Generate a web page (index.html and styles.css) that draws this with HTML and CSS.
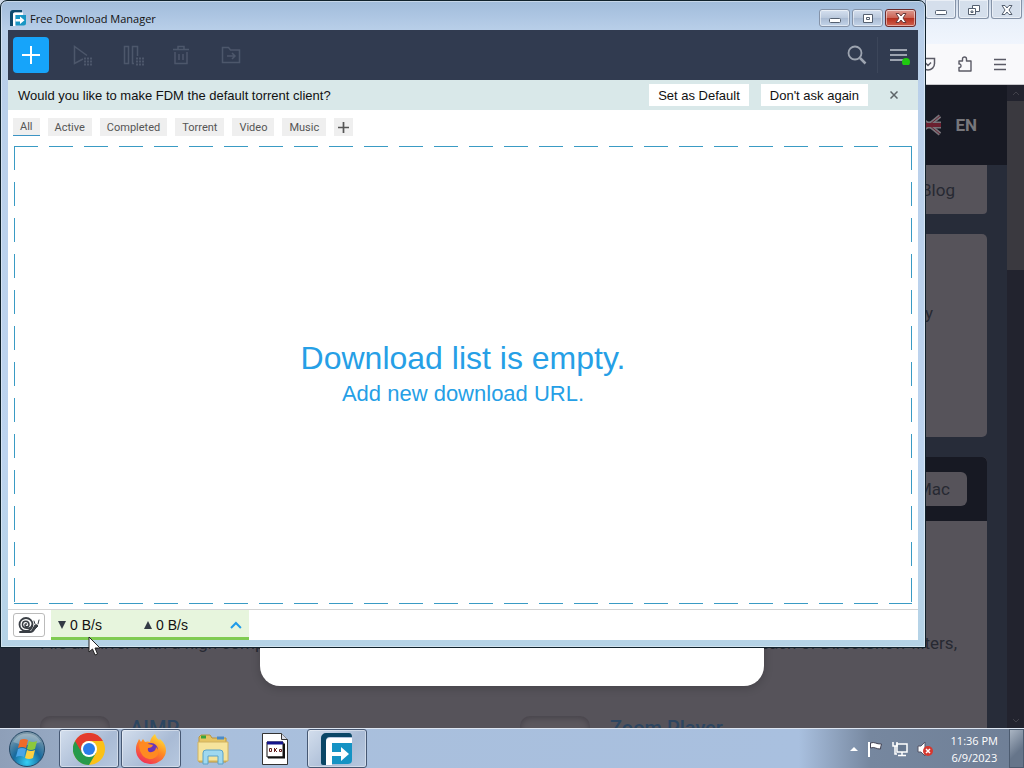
FILE: index.html
```
<!DOCTYPE html>
<html lang="en">
<head>
    <meta charset="UTF-8">
    <meta name="viewport" content="width=device-width, initial-scale=1.0">
    <title>Free Download Manager</title>
    <link rel="stylesheet" href="styles.css">
</head>
<body>
    <div class="desktop">
        <div class="browser">
            <div class="browser-title">
                <button type="button" class="win-button" aria-label="Minimize browser">
                    <svg width="14" height="12" viewBox="0 0 14 12"><rect x="1.500" y="6.500" width="11" height="4" rx="1" fill="#fff" stroke="#556070"/></svg>
                </button>
                <button type="button" class="win-button" aria-label="Restore browser">
                    <svg width="14" height="12" viewBox="0 0 14 12" fill="#fff" stroke="#556070"><path d="M5.500 1.500h7v6h-7z"/><path d="M1.500 4.500h7v6h-7z"/><path d="M4 7h2v1.500H4z"/></svg>
                </button>
                <button type="button" class="win-button" aria-label="Close browser">
                    <svg width="14" height="12" viewBox="0 0 14 12"><path d="M2 1.500h3l2 2.500 2-2.500h3L9 6l3 4.500H9L7 8l-2 2.500H2L5 6z" fill="#fff" stroke="#556070"/></svg>
                </button>
            </div>
            <div class="browser-tools">
                <button type="button" class="icon-button" aria-label="Save to Pocket">
                    <svg width="16" height="16" viewBox="0 0 16 16" fill="none" stroke="#5b5b66" stroke-width="1.500"><path d="M1.500 2.500h13v5a6.500 6.500 0 0 1-13 0zM5 6.500l3 3 3-3"/></svg>
                </button>
                <button type="button" class="icon-button" aria-label="Extensions">
                    <svg width="16" height="16" viewBox="0 0 16 16" fill="none" stroke="#5b5b66" stroke-width="1.400" stroke-linejoin="round"><path d="M3 5h3.500V3a2 2 0 0 1 4 0v2H15v10H3v-3.500H4a2 2 0 0 0 0-3.500H3z"/></svg>
                </button>
                <button type="button" class="icon-button" aria-label="Open menu">
                    <svg width="14" height="14" viewBox="0 0 14 14" stroke="#5b5b66" stroke-width="1.300"><path d="M1 2.500h12M1 7.500h12M1 12.500h12"/></svg>
                </button>
            </div>
            <div class="browser-view">
                <div class="site">
                    <div class="site-nav">
                        <svg width="24" height="22" viewBox="0 0 24 22">
                            <path d="M1 2l22 18M1 20L23 2" stroke="#77747a" stroke-width="4"/>
                            <path d="M0 11h24" stroke="#77747a" stroke-width="7"/>
                            <path d="M0 11h24" stroke="#6b2030" stroke-width="4"/>
                            <path d="M1 2l22 18M1 20L23 2" stroke="#6b2030"/>
                        </svg>
                        <span>EN</span>
                    </div>
                    <div class="site-menu"><a href="#">Blog</a></div>
                    <div class="site-card">directory</div>
                    <div class="site-section">
                        <div class="site-section-head"><a href="#">Mac</a></div>
                        <div class="site-text">
                            <span>File archiver with a high comp</span>
                            <span>each of DirectShow filters,</span>
                        </div>
                        <div class="site-apps">
                            <div class="site-app"><i></i><a href="#">AIMP</a></div>
                            <div class="site-app"><i></i><a href="#">Zoom Player</a></div>
                        </div>
                    </div>
                    <div class="site-dialog"></div>
                </div>
                <div class="scrollbar">
                    <svg width="8" height="16" viewBox="0 0 8 16" fill="none" stroke="#41414a"><path d="M1 10l3-3 3 3"/></svg>
                    <div class="scrollbar-thumb"></div>
                    <svg class="scroll-down" width="8" height="16" viewBox="0 0 8 16" fill="none" stroke="#41414a"><path d="M1 7l3 3 3-3"/></svg>
                </div>
            </div>
        </div>

        <div class="fdm">
            <div class="fdm-title">
                <svg width="16" height="16" viewBox="0 0 32 32">
                    <path d="M0 32V6a6 6 0 0 1 6-6h18v5H9a3 3 0 0 0-3 3v24z" fill="#0c4a6e"/>
                    <path d="M6 32V9a4 4 0 0 1 4-4h16v5H11v22z" fill="#fff"/>
                    <path d="M11 10h21v16a5 5 0 0 1-5 5H11z" fill="#1996c4"/>
                    <path d="M11 18h9v-5l9 7.500-9 7.500v-5h-9z" fill="#fff"/>
                </svg>
                <span class="fdm-name">Free Download Manager</span>
                <button type="button" class="win-button" aria-label="Minimize">
                    <svg width="14" height="12" viewBox="0 0 14 12"><rect x="1.500" y="6.500" width="11" height="4" rx="1" fill="#fff" stroke="#556070"/></svg>
                </button>
                <button type="button" class="win-button" aria-label="Maximize">
                    <svg width="14" height="12" viewBox="0 0 14 12" fill="#fff" stroke="#556070"><path d="M2.500 2.500h9v8h-9z"/><path d="M5.500 5.500h3v2h-3z"/></svg>
                </button>
                <button type="button" class="win-button close" aria-label="Close">
                    <svg width="14" height="12" viewBox="0 0 14 12"><path d="M2 1.500h3l2 2.500 2-2.500h3L9 6l3 4.500H9L7 8l-2 2.500H2L5 6z" fill="#fff" stroke="#6a3a3a"/></svg>
                </button>
            </div>

            <div class="fdm-client">
                <div class="toolbar">
                    <button type="button" class="add-button" aria-label="Add download">
                        <svg width="20" height="20" viewBox="0 0 20 20" stroke="#fff" stroke-width="2"><path d="M10 1v18M1 10h18"/></svg>
                    </button>
                    <button type="button" class="tool-button" aria-label="Start">
                        <svg width="24" height="24" viewBox="0 0 24 24" fill="none" stroke="#4d576b" stroke-width="1.500"><path d="M13 16L4.500 20.500v-17L17 12.500"/><path d="M14 15.500h8M14 18.500h8M14 21.500h8" stroke-width="2" stroke-dasharray="2 1"/></svg>
                    </button>
                    <button type="button" class="tool-button" aria-label="Pause">
                        <svg width="24" height="24" viewBox="0 0 24 24" fill="none" stroke="#4d576b" stroke-width="1.500"><path d="M4.500 3.500h4v17h-4zM14 20.500h-1.500v-17h5V13"/><path d="M16 15.500h8M16 18.500h8M16 21.500h8" stroke-width="2" stroke-dasharray="2 1"/></svg>
                    </button>
                    <button type="button" class="tool-button" aria-label="Delete">
                        <svg width="24" height="24" viewBox="0 0 24 24" fill="none" stroke="#4d576b" stroke-width="1.500"><path d="M3 6.500h16M5 9v11.500h12V9M8 6V3.500h6V6M9 11v6M13 11v6"/></svg>
                    </button>
                    <button type="button" class="tool-button" aria-label="Move to folder">
                        <svg width="24" height="24" viewBox="0 0 24 24" fill="none" stroke="#4d576b" stroke-width="1.500"><path d="M2.500 4.500h6l2 2.500h9v12.500h-17zM7 13h8M12 10l3 3-3 3"/></svg>
                    </button>
                    <button type="button" class="tool-button search" aria-label="Search">
                        <svg width="20" height="20" viewBox="0 0 20 20" fill="none" stroke="#9da4b0"><circle cx="8" cy="8" r="6.500" stroke-width="1.800"/><path d="M13 13l5.500 5.500" stroke-width="2.500"/></svg>
                    </button>
                    <button type="button" class="tool-button menu" aria-label="Menu">
                        <svg width="20" height="20" viewBox="0 0 20 20"><path d="M0 5h17M0 10h17M0 15h13" stroke="#9da4b0" stroke-width="2"/><circle cx="16" cy="16" r="4" transform="translate(0 1)" fill="#1fcb10"/></svg>
                    </button>
                </div>

                <div class="banner">
                    <span class="banner-text">Would you like to make FDM the default torrent client?</span>
                    <button type="button" class="banner-button">Set as Default</button>
                    <button type="button" class="banner-button">Don't ask again</button>
                    <button type="button" class="banner-close" aria-label="Dismiss">
                        <svg width="8" height="8" viewBox="0 0 8 8" stroke="#5d6468" stroke-width="1.500"><path d="M.500.500l7 7M7.500.500l-7 7"/></svg>
                    </button>
                </div>

                <div class="tabs">
                    <button type="button" class="tab active">All</button>
                    <button type="button" class="tab">Active</button>
                    <button type="button" class="tab">Completed</button>
                    <button type="button" class="tab">Torrent</button>
                    <button type="button" class="tab">Video</button>
                    <button type="button" class="tab">Music</button>
                    <button type="button" class="tab add-tab" aria-label="Add tag">
                        <svg width="11" height="11" viewBox="0 0 11 11" stroke="#555" stroke-width="1.700"><path d="M5.500 0v11M0 5.500h11"/></svg>
                    </button>
                </div>

                <div class="drop-area">
                    <h1>Download list is empty.</h1>
                    <p>Add new download URL.</p>
                </div>

                <div class="status">
                    <button type="button" class="snail-button" aria-label="Snail mode">
                        <svg width="22" height="16" viewBox="0 0 22 16" fill="none" stroke="#3a3f45" stroke-linecap="round">
                            <path d="M2 15h10c4 0 4-3 6-6" stroke-width="2"/>
                            <path d="M14 13l3-5q2-1 3 1l-4 4z" fill="#3a3f45"/>
                            <path d="M17 7l-1-3M20 7l1-4"/>
                            <circle cx="8" cy="7.500" r="6.500" stroke-width="1.800"/>
                            <path d="M14 8c-1 5-10 4-9.500-1C5 3 11 3.500 11 7.500c0 3-4 3-4 .500q0-1.500 1.500-1" stroke-width="1.500"/>
                        </svg>
                    </button>
                    <button type="button" class="speed">
                        <span class="rate"><i class="down"></i>0 B/s</span>
                        <span class="rate"><i class="up"></i>0 B/s</span>
                        <svg width="12" height="8" viewBox="0 0 12 8" fill="none" stroke="#1f9bea" stroke-width="2"><path d="M1 7l5-5 5 5"/></svg>
                    </button>
                </div>
            </div>
        </div>

        <svg class="cursor" width="13" height="20" viewBox="0 0 13 20"><path d="M1 1v15l3.500-3 2.500 6 2.500-1L7 12h5z" fill="#fff" stroke="#222"/></svg>
    </div>

    <div class="taskbar">
        <button type="button" class="start" aria-label="Start menu">
            <svg width="38" height="38" viewBox="0 0 38 38">
                <defs>
                    <radialGradient id="orb" cx="50%" cy="88%" r="80%">
                        <stop offset="0" stop-color="#35d0f5"/>
                        <stop offset=".5" stop-color="#176a9e"/>
                        <stop offset="1" stop-color="#7b98aa"/>
                    </radialGradient>
                </defs>
                <circle cx="19" cy="19" r="17.500" fill="url(#orb)" stroke="#254866"/>
                <path d="M5 12a16 16 0 0 1 28 0q-14 6-28 0z" fill="#fff" opacity=".25"/>
                <path d="M12 10q4-2 8 0l-2 8q-4-2-8 0z" fill="#ee6a2a"/>
                <path d="M21 11q4 2 8 0l-2 8q-4 2-8 0z" fill="#8cc83c"/>
                <path d="M10 19q4-2 8 0l-2 8q-4-2-8 0z" fill="#4aa5e8"/>
                <path d="M19 20q4 2 8 0l-2 8q-4 2-8 0z" fill="#fbd042"/>
            </svg>
        </button>
        <button type="button" class="task open" aria-label="Chrome">
            <svg width="32" height="32" viewBox="0 0 32 32">
                <circle cx="16" cy="16" r="16" fill="#fbc116"/>
                <path d="M16 16L2.100 8A16 16 0 0 0 16 32l7-12z" fill="#269a4b"/>
                <path d="M2.100 8a16 16 0 0 1 27.800 0H16a8 8 0 0 0-7 12z" fill="#e33b2e"/>
                <circle cx="16" cy="16" r="8" fill="#fff"/>
                <circle cx="16" cy="16" r="6" fill="#2a7de9"/>
            </svg>
        </button>
        <button type="button" class="task open" aria-label="Firefox">
            <svg width="32" height="32" viewBox="0 0 32 32">
                <defs>
                    <linearGradient id="fox" x1=".8" y1="0" x2=".2" y2="1">
                        <stop offset="0" stop-color="#ffe83c"/>
                        <stop offset=".45" stop-color="#ff8a22"/>
                        <stop offset="1" stop-color="#f0265c"/>
                    </linearGradient>
                </defs>
                <path d="M1 16C1 11 3 9 4 6l2 3 2-3 2 3q3-1 5 0 1-5 5-8 1 4 4 6l1-1q6 5 6 12a15 14 0 0 1-30-2z" fill="url(#fox)"/>
                <circle cx="16" cy="17" r="7" fill="#6a35b8"/>
                <path d="M4 11q5-3 9 0l5 1q-1 3-5 3-1 5 4 4 4-1 4-5 5 5 0 10-7 5-13-1-4-5-4-12z" fill="#ff8a22"/>
            </svg>
        </button>
        <button type="button" class="task" aria-label="Explorer">
            <svg width="32" height="32" viewBox="0 0 32 32">
                <path d="M2 4l2-2h9l2 3h14v24H2z" fill="#e5c463" stroke="#b99440"/>
                <path d="M4 4h5" stroke="#38a33c" stroke-width="3"/>
                <path d="M20 5h7" stroke="#4b8bc8" stroke-width="3"/>
                <path d="M1 9h30v19H1z" fill="#f6e49c" stroke="#d0b260"/>
                <path d="M6 31V20q0-3 3-3h14q3 0 3 3v11h-5v-8H11v8z" fill="#9fd8ef" stroke="#5aa2c8"/>
            </svg>
        </button>
        <button type="button" class="task" aria-label="Script host">
            <svg width="26" height="32" viewBox="0 0 26 32">
                <path d="M.500.500h19l6 6v25H.500z" fill="#fff" stroke="#333"/>
                <path d="M19.500.500v6h6" fill="#d8dce8" stroke="#333"/>
                <path d="M5 9h16v15H5z" fill="#fff" stroke="#111"/>
                <path d="M5 10h16" stroke="#14148c" stroke-width="3"/>
                <path d="M7.500 15.500h2v3h-2zM12.500 15v4M15 15l-2 2 2 2M17.500 16.500h2v2h-2z" fill="none" stroke="#622"/>
                <path d="M6 24.500h16v-14" fill="none" stroke="#111" stroke-width="2"/>
            </svg>
        </button>
        <button type="button" class="task open" aria-label="Free Download Manager">
            <svg width="32" height="32" viewBox="0 0 32 32">
                <path d="M0 30V5a5 5 0 0 1 5-5h23q3 0 3 4H9a4 4 0 0 0-4 4v24H2q-2 0-2-2z" fill="#0a4666"/>
                <path d="M5 32V9a4 4 0 0 1 4-4h22v5H11v22z" fill="#fff"/>
                <path d="M11 10h20v17a4 4 0 0 1-4 4H11z" fill="#1593c4"/>
                <path d="M11 19h9v-5l8 7-8 7v-5h-9z" fill="#fff"/>
            </svg>
        </button>
        <div class="tray">
            <svg width="8" height="5" viewBox="0 0 8 5"><path d="M0 5l4-4 4 4z" fill="#fff"/></svg>
            <svg width="16" height="16" viewBox="0 0 16 16"><path d="M2 1v15" stroke="#fff" stroke-width="2"/><path d="M3.500 2q3-1 5 0t6 1q-1 3-1 5-3 0-5-1t-5 0z" fill="#fff" stroke="#445"/></svg>
            <svg width="16" height="16" viewBox="0 0 16 16" fill="none" stroke="#fff" stroke-width="1.500"><path d="M5 3h10v8H5z" fill="#67788f"/><path d="M10 11v3M6 14.500h8M1 1v4h4V1M3 5v8h2"/></svg>
            <svg width="16" height="16" viewBox="0 0 16 16"><path d="M1 5h3l4-4v14l-4-4H1z" fill="#fff" stroke="#556"/><circle cx="11" cy="10" r="5" fill="#d6382f"/><path d="M9 8l4 4M13 8l-4 4" stroke="#fff" stroke-width="1.500"/></svg>
        </div>
        <div class="clock"><span>11:36 PM</span><span>6/9/2023</span></div>
        <button type="button" class="show-desktop" aria-label="Show desktop"></button>
    </div>
</body>
</html>
```
FILE: styles.css
```
* {
    box-sizing: border-box;
}
body {
    margin: 0;
    height: 100vh;
    display: flex;
    flex-direction: column;
    overflow: hidden;
    font-family: "Liberation Sans", Arial, sans-serif;
    font-size: 13px;
    color: #111;
}
button {
    display: flex;
    align-items: center;
    justify-content: center;
    flex: none;
    margin: 0;
    padding: 0;
    border: none;
    background: none;
    font: inherit;
    color: inherit;
    cursor: pointer;
}
a {
    color: inherit;
    text-decoration: none;
}
h1, p {
    margin: 0;
    font-weight: normal;
}
.desktop {
    position: relative;
    flex: 1;
    min-height: 0;
    display: flex;
}

/* browser behind */
.browser {
    flex: 1;
    display: flex;
    flex-direction: column;
    font-family: Roboto, sans-serif;
}
.browser-title {
    display: flex;
    justify-content: flex-end;
    gap: 2px;
    height: 44px;
    padding-right: 2px;
    background: linear-gradient(#cbd7e7, #e9f0fa 20px, #f0f5fd);
}
.win-button {
    width: 31px;
    height: 18px;
    border: 1px solid #8593a8;
    border-radius: 3px;
    background: linear-gradient(#d5e0ef, #b9c8dc 50%, #a9bad2 50%, #c3d4e9);
    box-shadow: inset 0 0 0 1px rgba(255, 255, 255, 0.5);
}
.browser-title .win-button {
    height: 19px;
    padding-top: 2px;
    border-top: none;
    border-radius: 0 0 3px 3px;
    background: #d5dfec;
}
.win-button.close {
    border-color: #6b2b2c;
    background: linear-gradient(#dd9a90, #cb6152 50%, #b52d1c 50%, #d0604d);
}
.browser-tools {
    display: flex;
    align-items: center;
    justify-content: flex-end;
    gap: 12px;
    height: 41px;
    padding-right: 12px;
    background: #f9f9fb;
    border-bottom: 1px solid #c8c8cc;
}
.icon-button {
    width: 24px;
    height: 24px;
}
.browser-view {
    flex: 1;
    min-height: 0;
    display: flex;
}
.site {
    position: relative;
    flex: 1;
    display: flex;
    flex-direction: column;
    overflow: hidden;
    background: #272c39;
    font-size: 17px;
    color: #272932;
}
.site-nav {
    display: flex;
    flex: none;
    align-items: center;
    justify-content: flex-end;
    gap: 14px;
    height: 80px;
    padding-right: 30px;
    background: #171923;
    color: #77777c;
    font-size: 17px;
    font-weight: 700;
}
.site-menu, .site-card {
    display: flex;
    flex: none;
    align-items: center;
    justify-content: flex-end;
    margin: 0 20px 20px;
    background: #56535a;
}
.site-menu {
    height: 49px;
    padding-right: 32px;
    border-radius: 0 0 4px 4px;
}
.site-card {
    height: 203px;
    padding: 0 54px 46px 0;
    border-radius: 5px;
}
.site-section {
    display: flex;
    flex: 1;
    min-height: 0;
    flex-direction: column;
    margin: 0 20px;
    border-radius: 5px 5px 0 0;
    background: #56535a;
}
.site-section-head {
    display: flex;
    flex: none;
    align-items: center;
    justify-content: flex-end;
    height: 64px;
    padding-right: 20px;
    border-radius: 5px 5px 0 0;
    background: #171923;
}
.site-section-head a {
    padding: 7px 17px;
    border-radius: 6px;
    background: #56535a;
}
.site-text {
    display: flex;
    justify-content: space-between;
    padding: 112px 30px 0 20px;
    line-height: 20px;
}
.site-apps {
    display: grid;
    grid-template-columns: 1fr 1fr;
    column-gap: 13px;
    padding: 63px 0 0 20px;
    color: #2c4560;
    font-size: 20px;
    font-weight: 500;
    line-height: 24px;
}
.site-app {
    display: flex;
    gap: 20px;
}
.site-app i {
    width: 70px;
    height: 70px;
    border-radius: 10px;
    background: #5c585e;
    box-shadow: inset 0 2px 6px #454249;
}
.site-dialog {
    position: absolute;
    left: 260px;
    right: 243px;
    bottom: 42px;
    height: 200px;
    border-radius: 20px;
    background: #fff;
    box-shadow: 0 2px 10px rgba(0, 0, 0, 0.2);
}
.scrollbar {
    display: flex;
    flex-direction: column;
    align-items: center;
    width: 17px;
    background: #22232e;
}
.scrollbar-thumb {
    width: 100%;
    height: 169px;
    background: #3a393f;
}
.scroll-down {
    margin-top: auto;
}

/* FDM window */
.fdm {
    position: absolute;
    top: 0;
    right: 98px;
    bottom: 80px;
    left: 0;
    display: flex;
    flex-direction: column;
    padding: 0 7px 7px;
    border: 1px solid #10222c;
    border-radius: 7px 7px 0 0;
    background: linear-gradient(#a1bcdb, #b9cfe9 30px, #bdd4ef 70%, #b5d3e6);
    box-shadow: inset 0 0 0 1px rgba(255, 255, 255, 0.4);
}
.fdm-title {
    display: flex;
    flex: none;
    align-items: center;
    gap: 2px;
    height: 29px;
    padding: 5px 2px 0;
}
.fdm-name {
    flex: 1;
    padding-left: 2px;
    font-family: "Open Sans", "Segoe UI", sans-serif;
    font-size: 11px;
}
.fdm-client {
    flex: 1;
    min-height: 0;
    display: flex;
    flex-direction: column;
    background: #fff;
}
.toolbar {
    display: flex;
    flex: none;
    align-items: center;
    height: 50px;
    padding: 0 8px 0 5px;
    background: #313b50;
}
.add-button {
    width: 36px;
    height: 36px;
    margin-right: 8px;
    border-radius: 4px;
    background: #16a4fa;
}
.tool-button {
    width: 50px;
    height: 36px;
}
.search {
    width: 40px;
    margin-left: auto;
}
.menu {
    width: 33px;
    padding-left: 11px;
    border-left: 1px solid #3c465a;
}
.banner {
    display: flex;
    flex: none;
    align-items: center;
    gap: 12px;
    height: 30px;
    padding: 0 10px;
    background: #d9e8e9;
}
.banner-text {
    flex: 1;
}
.banner-button {
    height: 22px;
    padding: 0 9px;
    background: #fff;
}
.banner-close {
    width: 28px;
    height: 22px;
}
.tabs {
    display: flex;
    flex: none;
    gap: 8px;
    padding: 8px 5px 10px;
}
.tab {
    height: 18px;
    padding: 0 7px;
    background: #efefef;
    color: #555;
    font-family: Roboto, Tahoma, sans-serif;
    font-size: 11px;
}
.tab.active {
    border-bottom: 1px solid #3c94c4;
}
.add-tab {
    padding: 0 4px;
}
.drop-area {
    flex: 1;
    display: flex;
    flex-direction: column;
    align-items: center;
    justify-content: center;
    margin: 0 6px 5px;
    background:
        linear-gradient(90deg, #3a9bc4 24px, transparent 24px) 0 0 / 35px 1px repeat-x,
        linear-gradient(90deg, #3a9bc4 24px, transparent 24px) 0 100% / 35px 1px repeat-x,
        linear-gradient(#3a9bc4 24px, transparent 24px) 0 0 / 1px 36px repeat-y,
        linear-gradient(#3a9bc4 24px, transparent 24px) 100% 0 / 1px 36px repeat-y;
    color: #269fe6;
}
.drop-area h1 {
    font-size: 32px;
    line-height: 38px;
}
.drop-area p {
    font-size: 22px;
    line-height: 34px;
}
.status {
    display: flex;
    flex: none;
    height: 31px;
    padding-left: 5px;
    border-top: 1px solid #d4d4d4;
}
.snail-button {
    width: 32px;
    height: 24px;
    margin: 3px 6px 0 0;
    border: 1px solid #bbb;
    border-radius: 3px;
}
.speed {
    justify-content: flex-start;
    width: 198px;
    padding: 2px 7px 0;
    border-bottom: 3px solid #80cb52;
    background: #e7f5dd;
    font-size: 14px;
}
.rate {
    display: flex;
    align-items: center;
    gap: 4px;
    width: 87px;
}
.rate i {
    border: 4px solid transparent;
}
.rate .down {
    border-top: 8px solid #333b45;
    border-bottom: none;
}
.rate .up {
    border-bottom: 8px solid #333b45;
    border-top: none;
}
.cursor {
    position: absolute;
    top: 636px;
    left: 88px;
}

/* taskbar */
.taskbar {
    display: flex;
    flex: none;
    gap: 2px;
    height: 40px;
    border-top: 1px solid #dde6f2;
    background: linear-gradient(90deg, #8e9fb8, #a9bfdc 200px, #a9c0df 78%, #76879f 85%, #6f7f96);
}
.start {
    width: 57px;
    padding-right: 3px;
}
.task {
    width: 60px;
}
.task.open {
    border: 1px solid #465873;
    border-radius: 3px;
    background: linear-gradient(135deg, #d3deed, #a9bbd5 60%, #b7c8df);
    box-shadow: inset 0 0 0 1px rgba(255, 255, 255, 0.4);
}
.tray {
    display: flex;
    align-items: center;
    gap: 9px;
    margin-left: auto;
    padding-right: 16px;
}
.clock {
    display: flex;
    flex-direction: column;
    align-items: center;
    justify-content: center;
    padding-right: 9px;
    color: #fff;
    font-family: "Open Sans", "Segoe UI", sans-serif;
    font-size: 11px;
    line-height: 17px;
}
.show-desktop {
    width: 15px;
    border: 1px solid #4c5b6f;
    background: linear-gradient(135deg, #aab5c3, #66758a 60%);
}
```
